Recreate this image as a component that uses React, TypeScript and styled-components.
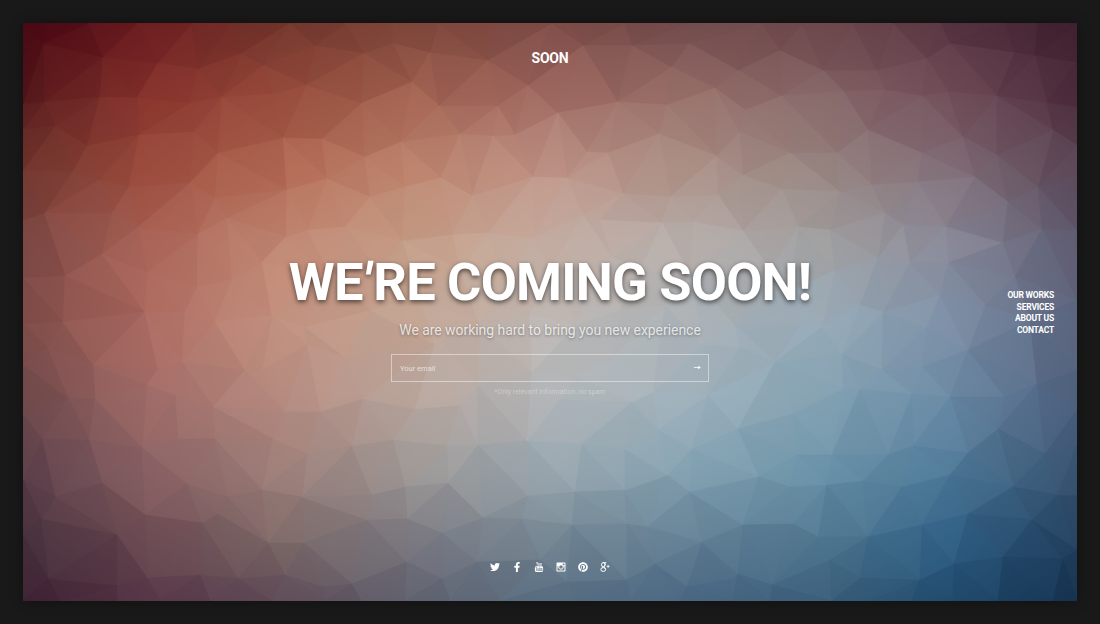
import React from "react";
import styled, { createGlobalStyle } from "styled-components";
import { FaTwitter, FaFacebookF, FaPinterest } from "react-icons/fa";
import { TfiYoutube } from "react-icons/tfi";

const GlobalStyle = createGlobalStyle`
  * { box-sizing: border-box; }
  body {
    margin: 0;
    background: #191919;
    font-family: Roboto, "Liberation Sans", sans-serif;
    color: #fff;
  }
`;

/* ---------- low-poly backdrop ---------- */

type Point = [number, number];
type Rgb = [number, number, number];

const LEFT = 23;
const TOP = 23;
const WIDTH = 1054;
const HEIGHT = 578;

const columns = [23, 150, 280, 415, 550, 685, 820, 950, 1077];
const rows = [23, 95, 170, 245, 320, 395, 470, 545, 601];
const palette = [
  "450512 6a1b1f 70352b 7c4439 7b4945 714a4b 6b454a 563340 3b1c2c",
  "561a1c 8a352e 974b3b a26351 a06a62 966f68 886869 734f5a 4b2a3b",
  "71372f 9c4c3d b36b55 bf8670 bf9487 ad9288 988682 83707a 5a4655",
  "7a4644 ac6659 c18874 c69f88 c5afa4 b7afac a2a1a1 8a8b9a 5d5a70",
  "7d4a46 b06d63 c3927f c4a796 c0bab6 adb3b7 98abb8 8092a9 57607a",
  "6f494a a36d69 b68b80 b9a69d b4b7ba a3b4be 86a4b4 6d8ba6 4d5f7c",
  "5b3f4a 8a6264 9e7f79 9e9997 9aa8b0 84a2b1 6b93a9 4f7a99 385270",
  "452f3b 6b4a52 7b6867 787780 738592 637f94 4f768f 2f5f85 223f5d",
  "3a1e30 563547 5d4a56 5d5f6c 566c80 486581 3a5d79 204a6d 14304d",
].map((row) =>
  row
    .split(" ")
    .map(
      (hex) =>
        [0, 2, 4].map((i) => parseInt(hex.slice(i, i + 2), 16)) as Rgb
    )
);

const vertices: Point[] = `
43,43 103,57 44,102 158,63 198,69 192,23 242,53 232,23 315,45 263,65 307,85 273,94 222,97 190,103 137,98 100,97
55,126 87,146 139,135 194,132 218,153 283,138 322,139 362,103 364,53 73,171 99,180 129,187 190,183 215,198 287,190
327,179 365,157 44,213 112,213 137,228 198,234 227,218 286,237 308,230 345,227 65,276 102,254 147,272 197,287
232,280 262,262 23,170 23,220 23,104 23,129 23,278 23,23 43,23 88,23 137,23 290,23 345,23
393,43 430,52 412,82 488,60 528,85 439,106 498,106 401,142 460,134 493,136 515,135 558,113 618,102 583,45 632,45
672,67 690,43 715,88 667,105 587,152 608,153 659,134 717,156 441,178 405,187 472,196 533,177 567,178 623,194
670,197 718,195 370,197 403,241 453,235 488,233 533,238 583,215 600,220 662,223 693,222 612,257 393,23 438,23 493,23
552,23 573,23 625,23 687,23 738,70 780,50 823,70 877,70 927,58 950,43 1015,52 1035,55 1077,62 782,96 745,110
843,91 885,90 922,96 948,92 997,96 1047,103 1077,107 868,130 963,137 1053,130 1077,145 740,132 790,153 837,153
922,153 997,155 743,175 782,189 840,192 872,185 918,182 975,177 1038,187 1077,175 1008,202 885,213 903,225 946,227
830,230 798,227 743,231 1042,229 1077,230 1003,243 878,258 910,263 948,263 835,270 1015,277 762,23 802,23 853,23
893,23 942,23 1005,23 1038,23 1077,23 23,324 63,322 47,347 93,365 145,312 158,369 182,362 185,312 215,322 272,315
305,327 307,345 345,357 245,370 262,370 147,385 175,395 213,407 285,412 320,412 363,399 68,398 95,399 23,398
23,415 42,439 89,440 142,448 178,439 215,439 273,439 307,454 352,446 102,483 55,497 187,484 228,497 262,490 302,497
145,515 202,523 217,514 117,535 41,519 23,535 268,543 304,543 367,520 48,579 147,578 117,586 200,575 238,579 285,575
352,584 323,587 23,601 60,601 117,601 160,601 210,601 272,601 325,601 362,601 393,440 415,409 460,405 447,446
478,445 477,384 527,441 560,399 582,444 575,492 528,496 405,487 448,483 372,495 407,519 442,533 483,518 522,519
572,525 627,524 647,527 625,490 625,449 658,429 632,402 668,475 692,449 690,492 708,395 653,392 407,562 477,562
442,579 540,560 567,582 655,564 627,580 702,542 732,579 687,587 612,359 575,375 702,344 435,344 532,372 405,601
450,601 500,601 575,601 630,601 680,601 732,601 735,325 802,324 822,327 740,347 775,362 842,354 927,327 883,312
922,367 882,370 968,350 843,389 860,389 912,394 950,397 1005,397 1037,384 793,414 998,429 1045,454 738,429 797,455
832,455 888,455 913,446 968,453 759,477 790,487 827,485 863,481 902,487 950,475 1013,487 1058,495 1077,495 743,525
793,524 818,537 868,537 922,525 968,514 1032,520 738,574 772,585 830,560 860,578 920,580 954,564 1003,557 1063,559
1077,550 1077,410 1077,445 1077,370 1077,300 832,601 870,601 912,601 953,601 998,601 1053,601 1077,601 770,601
370,310 330,275 378,270 442,342 420,295 460,270 505,285 550,270 590,290 640,270 690,275 770,270 480,325 530,315
575,325 620,310 665,305 23,480 23,365 1030,320 985,305 940,295 860,305 790,290
`
  .trim()
  .split(/\s+/)
  .map((pair) => pair.split(",").map(Number) as Point);

function colourAt(x: number, y: number): Rgb {
  let c = 0;
  let r = 0;
  while (c < columns.length - 2 && x > columns[c + 1]) c++;
  while (r < rows.length - 2 && y > rows[r + 1]) r++;
  const u = (x - columns[c]) / (columns[c + 1] - columns[c]);
  const v = (y - rows[r]) / (rows[r + 1] - rows[r]);
  return [0, 1, 2].map((k) => {
    const upper = palette[r][c][k] * (1 - u) + palette[r][c + 1][k] * u;
    const lower = palette[r + 1][c][k] * (1 - u) + palette[r + 1][c + 1][k] * u;
    return upper * (1 - v) + lower * v;
  }) as Rgb;
}

interface Face {
  p: [Point, Point, Point];
  cx: number;
  cy: number;
  r2: number;
}

function makeFace(a: Point, b: Point, c: Point): Face | null {
  const d = 2 * (a[0] * (b[1] - c[1]) + b[0] * (c[1] - a[1]) + c[0] * (a[1] - b[1]));
  if (Math.abs(d) < 1e-4) return null;
  const sa = a[0] ** 2 + a[1] ** 2;
  const sb = b[0] ** 2 + b[1] ** 2;
  const sc = c[0] ** 2 + c[1] ** 2;
  const cx = (sa * (b[1] - c[1]) + sb * (c[1] - a[1]) + sc * (a[1] - b[1])) / d;
  const cy = (sa * (c[0] - b[0]) + sb * (a[0] - c[0]) + sc * (b[0] - a[0])) / d;
  return { p: [a, b, c], cx, cy, r2: (a[0] - cx) ** 2 + (a[1] - cy) ** 2 };
}

/* Bowyer–Watson triangulation; a tiny nudge keeps border points from lining up. */
function triangulate(source: Point[]): Face[] {
  const points = source.map(
    ([x, y], i) => [x + Math.sin(i * 7.3) * 0.02, y + Math.cos(i * 5.1) * 0.02] as Point
  );
  const far: Point[] = [
    [-9000, -7000],
    [11000, -7300],
    [900, 14000],
  ];
  let faces: Face[] = [makeFace(far[0], far[1], far[2])!];
  for (const pt of points) {
    const hit = faces.filter((f) => (pt[0] - f.cx) ** 2 + (pt[1] - f.cy) ** 2 < f.r2);
    const edges: [Point, Point][] = [];
    hit.forEach((f) =>
      [0, 1, 2].forEach((i) => edges.push([f.p[i], f.p[(i + 1) % 3]]))
    );
    const rim = edges.filter(
      ([a, b], i) =>
        !edges.some(
          ([m, n], j) => i !== j && ((a === m && b === n) || (a === n && b === m))
        )
    );
    faces = faces.filter((f) => !hit.includes(f));
    rim.forEach(([a, b]) => {
      const next = makeFace(a, b, pt);
      if (next) faces.push(next);
    });
  }
  return faces.filter((f) => !f.p.some((q) => far.includes(q)));
}

const facets = triangulate(vertices).map((f) => {
  const mx = (f.p[0][0] + f.p[1][0] + f.p[2][0]) / 3;
  const my = (f.p[0][1] + f.p[1][1] + f.p[2][1]) / 3;
  const seed = Math.sin(mx * 12.9898 + my * 78.233) * 43758.5453;
  const shade = (seed - Math.floor(seed) - 0.5) * 7;
  const [r, g, b] = colourAt(mx, my).map((v) =>
    Math.round(Math.max(0, Math.min(255, v + shade * (0.5 + v / 260))))
  );
  return {
    points: f.p.map((q) => q.map((n) => n.toFixed(1)).join(",")).join(" "),
    fill: `rgb(${r},${g},${b})`,
  };
});

const Scene = styled.svg`
  position: absolute;
  inset: 0;
  width: 100%;
  height: 100%;
`;

const Backdrop = () => (
  <Scene viewBox={`${LEFT} ${TOP} ${WIDTH} ${HEIGHT}`} preserveAspectRatio="none" aria-hidden>
    <defs>
      {palette.map((row, i) => (
        <React.Fragment key={i}>
          <linearGradient id={`tone${i}`} gradientUnits="userSpaceOnUse" x1={LEFT} x2={LEFT + WIDTH} y1="0" y2="0">
            {row.map((rgb, c) => (
              <stop key={c} offset={(columns[c] - LEFT) / WIDTH} stopColor={`rgb(${rgb.join(",")})`} />
            ))}
          </linearGradient>
          {i > 0 && (
            <>
              <linearGradient id={`ramp${i}`} gradientUnits="userSpaceOnUse" x1="0" x2="0" y1={rows[i - 1]} y2={rows[i]}>
                <stop offset="0" stopColor="#fff" stopOpacity="0" />
                <stop offset="1" stopColor="#fff" />
              </linearGradient>
              <mask id={`fade${i}`} maskUnits="userSpaceOnUse" x={LEFT} y={TOP} width={WIDTH} height={HEIGHT}>
                <rect x={LEFT} y={TOP} width={WIDTH} height={HEIGHT} fill={`url(#ramp${i})`} />
              </mask>
            </>
          )}
        </React.Fragment>
      ))}
    </defs>
    {palette.map((_, i) => (
      <rect
        key={i}
        x={LEFT}
        y={TOP}
        width={WIDTH}
        height={HEIGHT}
        fill={`url(#tone${i})`}
        mask={i > 0 ? `url(#fade${i})` : undefined}
      />
    ))}
    <g opacity="0.6">
      {facets.map((f, i) => (
        <polygon key={i} points={f.points} fill={f.fill} stroke={f.fill} strokeWidth="0.5" />
      ))}
    </g>
  </Scene>
);

/* ---------- page ---------- */

const Page = styled.div`
  height: 624px;
  padding: 23px;
  background: #191919;
  overflow: hidden;
`;

const Stage = styled.main`
  position: relative;
  height: 578px;
  box-shadow: 0 0 12px rgba(0, 0, 0, 0.35);
`;

const Content = styled.div`
  position: relative;
  height: 100%;
  display: grid;
  grid-template-columns: 1fr 560px 1fr;
  grid-template-rows: 70px 1fr 68px;
  justify-items: center;
`;

const Logo = styled.div`
  grid-column: 2;
  padding-top: 26px;
  font-size: 14px;
  line-height: 18px;
  font-weight: 700;
  letter-spacing: -0.2px;
`;

const Hero = styled.section`
  grid-column: 2;
  grid-row: 2;
  display: flex;
  flex-direction: column;
  align-items: center;
  padding-top: 159px;
  white-space: nowrap;
`;

const Title = styled.h1`
  margin: 0;
  font-size: 52.5px;
  line-height: 60px;
  font-weight: 700;
  letter-spacing: -0.8px;
  text-shadow: 0 2px 5px rgba(0, 0, 0, 0.6);
`;

const Apostrophe = styled.span`
  display: inline-block;
  padding: 0 1px 0 2px;
  transform: skewX(-9deg);
  transform-origin: 50% 30%;
`;

const Tagline = styled.p`
  margin: 7px 0 0;
  font-size: 14px;
  line-height: 22px;
  letter-spacing: -0.05px;
  color: rgba(255, 255, 255, 0.76);
  text-shadow: 0 1px 3px rgba(0, 0, 0, 0.35);
`;

const EmailForm = styled.div`
  margin-top: 13px;
  width: 318px;
  height: 28px;
  padding: 0 7px 0 8px;
  display: flex;
  align-items: center;
  justify-content: space-between;
  border: 1px solid rgba(255, 255, 255, 0.45);

  svg {
    margin-bottom: 1px;
  }
`;

const Placeholder = styled.span`
  font-size: 7.5px;
  color: rgba(255, 255, 255, 0.66);
`;

const Note = styled.p`
  margin: 5px 0 0;
  font-size: 7px;
  line-height: 10px;
  color: rgba(255, 255, 255, 0.36);
`;

const SideNav = styled.nav`
  grid-column: 3;
  grid-row: 2;
  justify-self: end;
  padding: 197px 23px 0 0;
  display: flex;
  flex-direction: column;
  align-items: flex-end;
`;

const NavLink = styled.a`
  font-size: 8.5px;
  line-height: 11.5px;
  font-weight: 700;
  letter-spacing: -0.2px;
`;

const Socials = styled.footer`
  grid-column: 2;
  grid-row: 3;
  display: flex;
  gap: 12px;
  padding-top: 29px;

  svg {
    width: 10px;
    height: 10px;
    display: block;
  }
`;

const Arrow = () => (
  <svg width="7" height="5" viewBox="0 0 7 5" aria-hidden>
    <path d="M0 2.5H5" stroke="#fff" strokeWidth="0.8" />
    <path d="M4.2 0.7 6.8 2.5 4.2 4.3Z" fill="#fff" />
  </svg>
);

const Camera = () => (
  <svg viewBox="0 0 20 20" aria-hidden>
    <path
      fill="#fff"
      fillRule="evenodd"
      d="M2.5 1h15A1.5 1.5 0 0 1 19 2.5v15a1.5 1.5 0 0 1-1.5 1.5h-15A1.5 1.5 0 0 1 1 17.5v-15A1.5 1.5 0 0 1 2.5 1ZM13.5 3v3.5H17V3ZM3 8.500V17h14V8.500h-1.800a5.400 5.400 0 1 1-10.400 0ZM10 6.500a3.500 3.500 0 1 0 0 7 3.500 3.500 0 0 0 0-7Z"
    />
  </svg>
);

const PlusMark = () => (
  <svg viewBox="0 0 20 20" aria-hidden fill="none" stroke="#fff">
    <ellipse cx="6.500" cy="5.500" rx="3.500" ry="4.200" strokeWidth="2" />
    <ellipse cx="6.500" cy="15" rx="4.800" ry="3.900" strokeWidth="2" />
    <path d="M6 1.300h6.500M9 1.500c2.500 3 1.500 5-.5 6.500-2 1.600 2.300 3 2.400 6" strokeWidth="1.800" />
    <path d="M13.200 8.800h6M16.200 5.800v6" strokeWidth="1.600" />
  </svg>
);

export default function App() {
  return (
    <Page>
      <GlobalStyle />
      <Stage>
        <Backdrop />
        <Content>
          <Logo>SOON</Logo>
          <Hero>
            <Title>
              WE<Apostrophe>'</Apostrophe>RE COMING SOON!
            </Title>
            <Tagline>We are working hard to bring you new experience</Tagline>
            <EmailForm>
              <Placeholder>Your email</Placeholder>
              <Arrow />
            </EmailForm>
            <Note>*Only relevant information, no spam</Note>
          </Hero>
          <SideNav>
            <NavLink>OUR WORKS</NavLink>
            <NavLink>SERVICES</NavLink>
            <NavLink>ABOUT US</NavLink>
            <NavLink>CONTACT</NavLink>
          </SideNav>
          <Socials>
            <FaTwitter />
            <FaFacebookF />
            <TfiYoutube />
            <Camera />
            <FaPinterest />
            <PlusMark />
          </Socials>
        </Content>
      </Stage>
    </Page>
  );
}
